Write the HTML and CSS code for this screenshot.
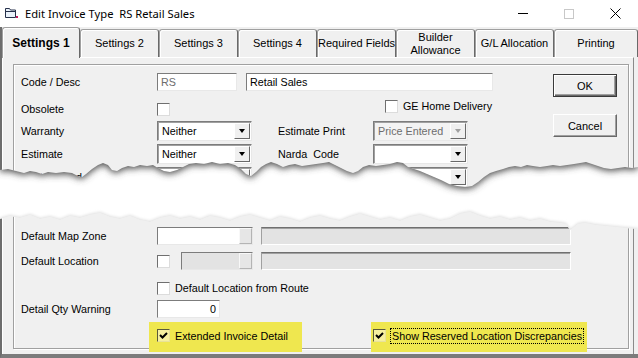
FILE: index.html
```html
<!DOCTYPE html>
<html lang="en">
<head>
  <meta charset="UTF-8">
  <title>Edit Invoice Type</title>
  <link rel="stylesheet" href="styles.css">
</head>
<body>
  <div class="window">
    <div class="titlebar">
      <svg class="app-icon" width="13" height="11" viewBox="0 0 13 11">
        <path d="M0.5 0.5h4l1 1.5h5v7.5h-10z" fill="#eaf2fb" stroke="#26304a"/>
        <path d="M0.5 3.5h10.5" stroke="#26304a"/>
        <rect x="11" y="8" width="2" height="2" fill="#c2185b"/>
      </svg>
      <span class="title">Edit Invoice Type&nbsp; RS Retail Sales</span>
      <div class="caption">
        <span class="cap"><span class="cap-min"></span></span>
        <span class="cap"><span class="cap-max"></span></span>
        <span class="cap">
          <svg width="11" height="11" viewBox="0 0 11 11"><path d="M0.5 0.5l10 10M10.5 0.5l-10 10" stroke="#000" stroke-width="1"/></svg>
        </span>
      </div>
    </div>

    <div class="frame">
      <div class="tabs">
        <div class="tab active">Settings 1</div>
        <div class="tab">Settings 2</div>
        <div class="tab">Settings 3</div>
        <div class="tab">Settings 4</div>
        <div class="tab">Required Fields</div>
        <div class="tab">Builder<br>Allowance</div>
        <div class="tab">G/L Allocation</div>
        <div class="tab last">Printing</div>
      </div>

      <div class="panel">
        <div class="group">
          <div class="top">
            <div class="fields">
              <div class="row">
                <span class="label">Code / Desc</span>
                <span class="input code muted">RS</span>
                <span class="input desc">Retail Sales</span>
              </div>
              <div class="row r-obsolete">
                <span class="label">Obsolete</span>
                <span class="chk"></span>
                <span class="chk ge"></span>
                <span class="chk-text">GE Home Delivery</span>
              </div>
              <div class="row r-warranty">
                <span class="label">Warranty</span>
                <span class="select">Neither<span class="arrow"><i></i></span></span>
                <span class="label2">Estimate Print</span>
                <span class="select disabled">Price Entered<span class="arrow"><i></i></span></span>
              </div>
              <div class="row r-estimate">
                <span class="label">Estimate</span>
                <span class="select">Neither<span class="arrow"><i></i></span></span>
                <span class="label2">Narda&nbsp; Code</span>
                <span class="select"><span class="arrow"><i></i></span></span>
              </div>
              <div class="row r-method">
                <span class="label">Print Method</span>
                <span class="select"><span class="arrow"><i></i></span></span>
                <span class="label2">Terms</span>
                <span class="select"><span class="arrow"><i></i></span></span>
              </div>
            </div>
            <div class="buttons">
              <button class="btn default">OK</button>
              <button class="btn">Cancel</button>
            </div>
          </div>

          <div class="lower">
            <div class="row r-map">
              <span class="label">Default Map Zone</span>
              <span class="lookup"><span class="lookup-btn"></span></span>
              <span class="readonly"></span>
            </div>
            <div class="row r-loc">
              <span class="label">Default Location</span>
              <span class="chk"></span>
              <span class="lookup grey"><span class="lookup-btn"></span></span>
              <span class="readonly"></span>
            </div>
            <div class="row r-route">
              <span class="label"></span>
              <span class="chk"></span>
              <span class="chk-text">Default Location from Route</span>
            </div>
            <div class="row r-qty">
              <span class="label">Detail Qty Warning</span>
              <span class="input qty">0</span>
            </div>
            <div class="row r-marked">
              <span class="mark mark-a">
                <span class="chk checked"><svg width="11" height="11" viewBox="0 0 11 11"><path d="M2 5l2.5 2.5L9 3" fill="none" stroke="#000" stroke-width="2"/></svg></span>
                <span class="chk-text">Extended Invoice Detail</span>
              </span>
              <span class="mark mark-b">
                <span class="chk checked"><svg width="11" height="11" viewBox="0 0 11 11"><path d="M2 5l2.5 2.5L9 3" fill="none" stroke="#000" stroke-width="2"/></svg></span>
                <span class="focus">Show Reserved Location Discrepancies</span>
              </span>
            </div>
          </div>
        </div>
      </div>
    </div>

    <svg class="tear" width="638" height="90" viewBox="0 150 638 90">
      <defs>
        <clipPath id="paper">
          <path d="M0,170 8,169 16,171 24,173 30,171 36,172 42,174 48,172 56,173 64,172 72,173 78,176 82,177 86,174 92,169 98,165 103,163 108,165 112,170 117,171 122,168 128,166 134,167 140,165 147,166 153,165 158,168 164,171 170,172 177,170 183,167 189,164 196,163 204,164 212,162 220,164 228,163 235,165 241,169 246,174 251,176 256,172 261,167 266,164 271,162 277,164 283,167 289,165 295,164 302,166 309,165 316,164 323,163 329,162 335,165 341,168 347,171 353,173 358,171 363,167 369,165 376,166 383,165 390,164 397,162 403,163 408,167 414,169 420,171 427,174 434,177 441,180 449,184 457,186 465,187 472,186 478,182 484,177 490,173 496,171 503,169 509,167 515,166 521,167 527,165 533,166 540,167 547,166 553,165 560,166 567,165 574,164 580,163 586,162 592,164 598,166 604,168 611,169 618,168 625,167 632,168 638,167 L638,229 625,228 615,227 605,226 595,225 585,223 578,224 573,228 570,230 566,224 560,223 550,222 540,219 530,221 520,218 510,220 500,217 490,219 480,216 470,212 460,214 450,219 440,221 430,218 420,215 410,217 400,221 390,218 380,220 370,217 360,214 350,217 340,221 330,219 320,216 310,218 300,222 290,219 280,217 270,221 260,218 250,215 240,217 230,221 220,218 210,216 200,220 190,217 180,219 170,216 160,218 150,222 140,220 130,216 120,219 110,217 100,213 90,215 80,218 70,216 60,220 50,217 40,219 30,215 20,218 10,216 0,219Z"/>
        </clipPath>
        <filter id="shade" x="-5%" y="-100%" width="110%" height="300%">
          <feGaussianBlur stdDeviation="3.5"/>
        </filter>
        <filter id="haze" x="-5%" y="-100%" width="110%" height="300%">
          <feGaussianBlur stdDeviation="1.5"/>
        </filter>
      </defs>
      <rect x="0" y="150" width="638" height="90" fill="#fff" clip-path="url(#paper)"/>
      <g clip-path="url(#paper)">
        <path transform="translate(0 2)" filter="url(#shade)" fill="#4a4a4a" d="M0,140 L0,170 8,169 16,171 24,173 30,171 36,172 42,174 48,172 56,173 64,172 72,173 78,176 82,177 86,174 92,169 98,165 103,163 108,165 112,170 117,171 122,168 128,166 134,167 140,165 147,166 153,165 158,168 164,171 170,172 177,170 183,167 189,164 196,163 204,164 212,162 220,164 228,163 235,165 241,169 246,174 251,176 256,172 261,167 266,164 271,162 277,164 283,167 289,165 295,164 302,166 309,165 316,164 323,163 329,162 335,165 341,168 347,171 353,173 358,171 363,167 369,165 376,166 383,165 390,164 397,162 403,163 408,167 414,169 420,171 427,174 434,177 441,180 449,184 457,186 465,187 472,186 478,182 484,177 490,173 496,171 503,169 509,167 515,166 521,167 527,165 533,166 540,167 547,166 553,165 560,166 567,165 574,164 580,163 586,162 592,164 598,166 604,168 611,169 618,168 625,167 632,168 638,167 L638,140Z"/>
        <path transform="translate(0 -1)" filter="url(#haze)" fill="#dedede" d="M0,219 10,216 20,218 30,215 40,219 50,217 60,220 70,216 80,218 90,215 100,213 110,217 120,219 130,216 140,220 150,222 160,218 170,216 180,219 190,217 200,220 210,216 220,218 230,221 240,217 250,215 260,218 270,221 280,217 290,219 300,222 310,218 320,216 330,219 340,221 350,217 360,214 370,217 380,220 390,218 400,221 410,217 420,215 430,218 440,221 450,219 460,214 470,212 480,216 490,219 500,217 510,220 520,218 530,221 540,219 550,222 560,223 566,224 570,230 573,228 578,224 585,223 595,225 605,226 615,227 625,228 638,229 L638,250 0,250Z"/>
      </g>
    </svg>
  </div>
</body>
</html>
```

FILE: styles.css
```css
* {
  box-sizing: border-box;
}

body {
  margin: 0;
  background: #fff;
  font-family: "Liberation Sans", Arial, sans-serif;
  font-size: 10.75px;
  color: #000;
}

.window {
  position: relative;
  width: 638px;
  height: 358px;
  background: #f0f0f0;
  display: flex;
  flex-direction: column;
  overflow: hidden;
}

/* title bar */
.titlebar {
  height: 27px;
  background: #fff;
  display: flex;
  align-items: center;
}

.app-icon {
  margin-left: 5px;
}

.title {
  margin-left: 7px;
  font-family: "Noto Sans", "Liberation Sans", sans-serif;
  font-size: 11.2px;
}

.caption {
  margin-left: auto;
  display: flex;
}

.cap {
  width: 46px;
  height: 27px;
  display: flex;
  align-items: center;
  justify-content: center;
}

.cap-min {
  width: 10px;
  height: 1px;
  background: #000;
}

.cap-max {
  width: 10px;
  height: 10px;
  border: 1px solid #c8c8c8;
}

/* dialog body */
.frame {
  flex: 1;
  display: flex;
  flex-direction: column;
  border-left: 2px solid #6d6d6d;
  border-bottom: 4px solid #7b7b7b;
}

.tabs {
  height: 30px;
  display: flex;
  align-items: flex-end;
  position: relative;
  z-index: 1;
}

.tab {
  width: 79px;
  height: 28px;
  display: flex;
  align-items: center;
  justify-content: center;
  text-align: center;
  font-size: 11px;
  line-height: 13px;
  background: #f0f0f0;
  border: 1px solid #a0a0a0;
  border-right-color: #696969;
  border-bottom: none;
  border-radius: 3px 3px 0 0;
  box-shadow: inset 1px 1px 0 #fff;
  white-space: nowrap;
}

.tab.active {
  width: 78px;
  height: 31px;
  margin-bottom: -1px;
  font-size: 12px;
  font-weight: bold;
}

.tab.last {
  flex: 1;
}

.panel {
  flex: 1;
  margin-right: 4px;
  border-top: 1px solid #fff;
  border-left: 1px solid #fff;
  border-right: 1px solid #8a8a8a;
  padding: 6px 0 0 10px;
}

.group {
  width: 616px;
  height: 285px;
  border: 1px solid #a0a0a0;
  box-shadow: inset 1px 1px 0 #fff, 1px 1px 0 #fff;
  padding: 7px 0 0 7px;
}

.top {
  display: flex;
}

.fields {
  flex: 1;
}

.buttons {
  width: 64px;
  margin-right: 11px;
  padding-top: 2px;
  display: flex;
  flex-direction: column;
  gap: 17px;
}

.btn {
  width: 64px;
  height: 23px;
  padding: 0;
  font: 11px "Liberation Sans", Arial, sans-serif;
  color: #000;
  background: #f0f0f0;
  border: 1px solid;
  border-color: #fff #696969 #696969 #fff;
  box-shadow: inset -1px -1px 0 #a0a0a0;
}

.btn.default {
  border-color: #3a3a3a;
  box-shadow: inset 1px 1px 0 #fff, inset -1px -1px 0 #696969, inset -2px -2px 0 #a0a0a0;
}

/* rows */
.row {
  display: flex;
  align-items: center;
  height: 20px;
  white-space: nowrap;
}

.label {
  width: 136px;
  flex: none;
}

.label2 {
  width: 95px;
  margin-left: 26px;
}

.r-obsolete {
  margin-top: 7px;
}

.r-warranty {
  margin-top: 2px;
}

.r-estimate,
.r-method {
  margin-top: 3px;
}

.input {
  height: 18px;
  display: flex;
  align-items: center;
  padding-left: 3px;
  background: #fff;
  border: 1px solid;
  border-color: #7c7c7c #e8e8e8 #e8e8e8 #7c7c7c;
}

.input.code {
  width: 80px;
}

.input.desc {
  width: 247px;
  margin-left: 9px;
}

.muted {
  color: #6d6d6d;
}

.chk {
  width: 13px;
  height: 13px;
  flex: none;
  background: #fff;
  border: 1px solid;
  border-color: #6f6f6f #dcdcdc #dcdcdc #6f6f6f;
  display: flex;
  align-items: center;
  justify-content: center;
}

.chk.ge {
  margin-left: 215px;
  align-self: flex-start;
  margin-top: 1px;
}

.r-obsolete .chk-text {
  align-self: flex-start;
  margin-top: 1px;
  line-height: 13px;
}

.chk-text {
  margin-left: 5px;
}

.select {
  width: 95px;
  height: 20px;
  display: flex;
  align-items: center;
  padding-left: 4px;
  background: #fff;
  border: 1px solid;
  border-color: #7c7c7c #e8e8e8 #e8e8e8 #7c7c7c;
  box-shadow: inset 1px 1px 0 #a0a0a0;
}

.select.disabled {
  background: #f3f3f3;
  color: #6d6d6d;
}

.arrow {
  margin-left: auto;
  margin-right: 1px;
  width: 16px;
  height: 16px;
  background: #f0f0f0;
  border: 1px solid;
  border-color: #fff #696969 #696969 #fff;
  display: flex;
  align-items: center;
  justify-content: center;
}

.arrow i {
  width: 1px;
  height: 0;
  border-left: 3px solid transparent;
  border-right: 3px solid transparent;
  border-top: 4px solid #000;
}

.disabled .arrow i {
  border-top-color: #a0a0a0;
}

/* lower part */
.lower {
  margin-top: 40px;
}

.lower .row {
  height: 18px;
}

.r-loc {
  margin-top: 7px;
}

.lower .r-route {
  height: 16px;
  margin-top: 10px;
}

.r-qty {
  margin-top: 4px;
}

.lookup {
  width: 96px;
  height: 18px;
  display: flex;
  justify-content: flex-end;
  background: #fff;
  border: 1px solid;
  border-color: #7c7c7c #e8e8e8 #e8e8e8 #7c7c7c;
}

.lookup.grey {
  width: 72px;
  margin-left: 11px;
  background: #e3e3e3;
}

.lookup-btn {
  width: 13px;
  height: 16px;
  background: #e6e6e6;
  border: 1px solid;
  border-color: #f8f8f8 #b4b4b4 #b4b4b4 #f8f8f8;
}

.readonly {
  width: 310px;
  height: 18px;
  margin-left: 8px;
  background: #e3e3e3;
  border: 1px solid;
  border-color: #707070 #fff #fff #a0a0a0;
  box-shadow: inset 0 1px 0 #a0a0a0;
}

.input.qty {
  width: 63px;
  justify-content: flex-end;
  padding-right: 3px;
}

.lower .r-marked {
  height: 30px;
  margin-top: 4px;
}

.mark {
  height: 30px;
  display: flex;
  align-items: center;
  padding-bottom: 3px;
  background: #efe74f;
}

.mark-a {
  width: 153px;
  margin-left: 128px;
  padding-left: 8px;
}

.mark-b {
  width: 216px;
  margin-left: 69px;
  padding-left: 2px;
}

.chk.checked {
  background: #f6f0a0;
  border-color: #5a5a3a #e8e29a #e8e29a #5a5a3a;
}

.focus {
  margin-left: 4px;
  height: 16px;
  line-height: 13px;
  padding: 1px 1px 0 1px;
  border: 1px dotted #000;
}

/* torn-paper cut laid over the form */
.tear {
  position: absolute;
  left: 0;
  top: 150px;
}
```
